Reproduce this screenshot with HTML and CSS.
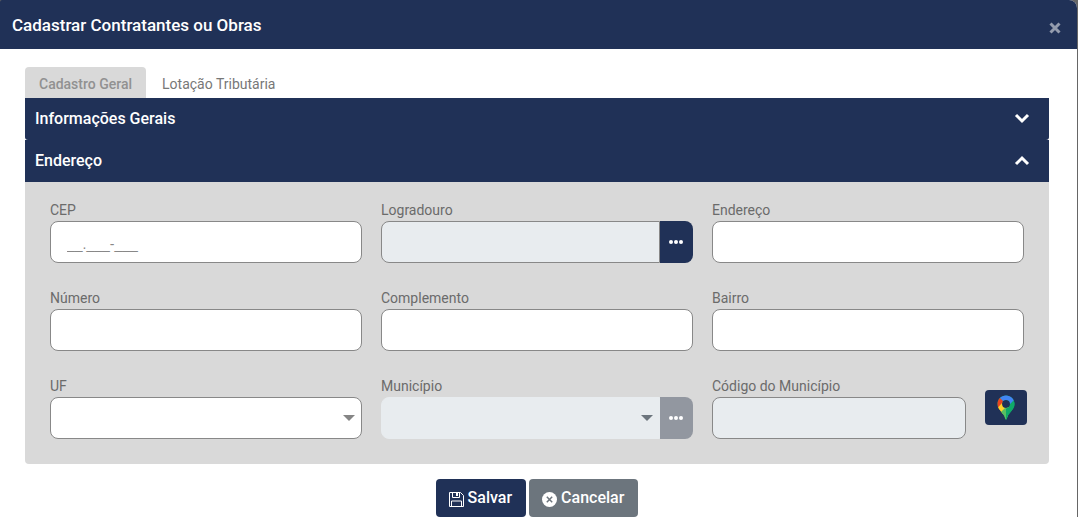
FILE: index.html
```
<!DOCTYPE html>
<html lang="pt-BR">
<head>
    <meta charset="UTF-8">
    <meta name="viewport" content="width=device-width, initial-scale=1.0">
    <title>Cadastrar Contratantes ou Obras</title>
    <link rel="stylesheet" href="styles.css">
</head>
<body>
    <div class="modal">
        <header class="modal-header">
            <h1>Cadastrar Contratantes ou Obras</h1>
            <button type="button" class="btn-fechar" aria-label="Fechar">
                <svg width="14" height="12" viewBox="0 0 14 12"><path d="M2.500 1.500l9 9M11.500 1.500l-9 9" fill="none" stroke="currentColor" stroke-width="3"/></svg>
            </button>
        </header>
        <form class="modal-body">
            <nav class="abas">
                <a href="#geral" class="aba ativa">Cadastro Geral</a>
                <a href="#lotacao" class="aba">Lotação Tributária</a>
            </nav>

            <button type="button" class="secao fechada">
                Informações Gerais
                <svg width="16" height="12" viewBox="0 0 16 12"><path d="M2 3l6 6 6-6" fill="none" stroke="currentColor" stroke-width="3"/></svg>
            </button>
            <button type="button" class="secao">
                Endereço
                <svg width="16" height="12" viewBox="0 0 16 12"><path d="M2 10l6-6 6 6" fill="none" stroke="currentColor" stroke-width="3"/></svg>
            </button>

            <div class="painel">
                <div class="campo">
                    <label for="cep">CEP</label>
                    <input type="text" id="cep" class="mascara" value="__.___-___">
                </div>
                <div class="campo">
                    <label for="logradouro">Logradouro</label>
                    <div class="grupo">
                        <input type="text" id="logradouro" disabled>
                        <button type="button" class="btn-busca" aria-label="Buscar logradouro">
                            <svg width="14" height="4" viewBox="0 0 14 4"><g fill="currentColor"><circle cx="2" cy="2" r="2"/><circle cx="7" cy="2" r="2"/><circle cx="12" cy="2" r="2"/></g></svg>
                        </button>
                    </div>
                </div>
                <div class="campo">
                    <label for="endereco">Endereço</label>
                    <input type="text" id="endereco">
                </div>
                <div class="campo">
                    <label for="numero">Número</label>
                    <input type="text" id="numero">
                </div>
                <div class="campo">
                    <label for="complemento">Complemento</label>
                    <input type="text" id="complemento">
                </div>
                <div class="campo">
                    <label for="bairro">Bairro</label>
                    <input type="text" id="bairro">
                </div>
                <div class="campo">
                    <label for="uf">UF</label>
                    <div class="seletor">
                        <select id="uf"><option></option></select>
                        <svg class="seta" width="12" height="6" viewBox="0 0 12 6"><path d="M0 0h12L6 6z" fill="currentColor"/></svg>
                    </div>
                </div>
                <div class="campo">
                    <label for="municipio">Município</label>
                    <div class="grupo">
                        <div class="seletor">
                            <select id="municipio" disabled><option></option></select>
                            <svg class="seta" width="12" height="6" viewBox="0 0 12 6"><path d="M0 0h12L6 6z" fill="currentColor"/></svg>
                        </div>
                        <button type="button" class="btn-busca" aria-label="Buscar município" disabled>
                            <svg width="14" height="4" viewBox="0 0 14 4"><g fill="currentColor"><circle cx="2" cy="2" r="2"/><circle cx="7" cy="2" r="2"/><circle cx="12" cy="2" r="2"/></g></svg>
                        </button>
                    </div>
                </div>
                <div class="campo-mapa">
                    <div class="campo">
                        <label for="codigo">Código do Município</label>
                        <input type="text" id="codigo" disabled>
                    </div>
                    <button type="button" class="btn-mapa" aria-label="Ver no mapa">
                        <svg width="18" height="25" viewBox="0 0 18 25">
                            <clipPath id="pino"><path fill-rule="evenodd" clip-rule="evenodd" d="M9 0.5C4 0.5 0.5 4.2 0.5 9c0 3.200 1.500 5 3.500 7.500 2 2.500 3.400 4 4.200 7 .3 1.200 1.300 1.200 1.600 0 .8-3 2.200-4.500 4.200-7 2-2.500 3.500-4.300 3.500-7.500C17.500 4.200 14 .5 9 .5zM9 5a4 4 0 1 1 0 8 4 4 0 0 1 0-8z"/></clipPath>
                            <g clip-path="url(#pino)">
                                <path d="M0 0h18v25H0z" fill="#0fa968"/>
                                <path d="M0 0l2.500 2.500L9 8l-7 8-2-4z" fill="#ea4320"/>
                                <path d="M0 13.500L6 7l6 5-7.500 10z" fill="#fdd32b"/>
                                <path d="M3.500 17.500L11 10v15H7z" fill="#58bd62"/>
                                <path d="M2.500 2.500L5 0h13v4.500L11 11z" fill="#4285f4"/>
                                <path d="M9 25V14l8-9h2v20z" fill="#0fa968"/>
                            </g>
                        </svg>
                    </button>
                </div>
            </div>

            <div class="acoes">
                <button type="submit" class="btn btn-salvar">
                    <svg width="15" height="15" viewBox="0 0 15 15"><path d="M.5.5h11l3 3v11H.5zM3.500.5v5h7v-5M2.500 14.500V9h10v5.500" fill="none" stroke="currentColor"/><path d="M7 1h2v3H7z" fill="currentColor"/></svg>
                    Salvar
                </button>
                <button type="button" class="btn btn-cancelar">
                    <svg width="15" height="15" viewBox="0 0 15 15"><circle cx="7.500" cy="7.500" r="7.500" fill="currentColor"/><path d="M4.800 4.800l5.400 5.400M10.200 4.800l-5.400 5.400" stroke="#6c757d" stroke-width="1.500"/></svg>
                    Cancelar
                </button>
            </div>
        </form>
    </div>
</body>
</html>
```
FILE: styles.css
```
* {
    box-sizing: border-box;
}
body {
    margin: 0;
    background-color: #666;
    font-family: Roboto, "Liberation Sans", sans-serif;
    font-size: 14px;
    color: #6b6b6b;
}
button, input, select {
    font: inherit;
    margin: 0;
}
button {
    border: none;
    cursor: pointer;
}
svg {
    display: block;
    flex: none;
}
.modal {
    margin-right: 1px;
    min-height: 100vh;
    background-color: #fff;
    border-radius: 5px 8px 0 0;
}
.modal-header {
    display: flex;
    justify-content: space-between;
    align-items: center;
    height: 49px;
    padding: 0 15px 0 12px;
    background-color: #203157;
    color: #fff;
    border-radius: 2px 8px 0 0;
}
.modal-header h1 {
    margin: 0;
    font-size: 17px;
    font-weight: 500;
}
.btn-fechar {
    padding: 6px 0 0;
    background: none;
    color: #949cae;
}
.modal-body {
    padding: 18px 28px 0 25px;
}
.abas {
    display: flex;
}
.aba {
    padding: 0 16px;
    line-height: 34px;
    height: 31px;
    color: #777;
    text-decoration: none;
}
.aba.ativa {
    padding: 0 14px;
    background-color: #d9d9d9;
    color: #919191;
    font-weight: 500;
    border-radius: 4px 4px 0 0;
}
.secao {
    display: flex;
    justify-content: space-between;
    align-items: center;
    width: 100%;
    height: 42px;
    padding: 0 19px 2px 10px;
    background-color: #203157;
    color: #fff;
    font-size: 16px;
    font-weight: 500;
    text-align: left;
}
.secao.fechada {
    border-radius: 0 0 3px 3px;
}
.painel {
    display: grid;
    grid-template-columns: repeat(3, 1fr);
    gap: 25px 19px;
    padding: 18px 25px 25px;
    background-color: #d9d9d9;
    border-radius: 0 0 4px 4px;
}
.campo {
    flex: 1;
    min-width: 0;
}
.campo label {
    display: block;
    line-height: 21px;
}
.campo input, .campo select {
    display: block;
    width: 100%;
    height: 42px;
    padding: 0 16px;
    border: 1px solid #888;
    border-radius: 8px;
    background-color: #fff;
    color: #6b6b6b;
}
.campo select {
    appearance: none;
}
.campo input:disabled, .campo select:disabled {
    background-color: #e8ecef;
    opacity: 1;
}
.campo select:disabled {
    border-color: #e8ecef;
}
.campo .mascara {
    padding-top: 4px;
    font-family: "Liberation Sans", sans-serif;
    color: #888;
}
.grupo {
    display: flex;
}
.grupo input, .grupo select {
    border-radius: 8px 0 0 8px;
}
.seletor {
    position: relative;
    flex: 1;
}
.seta {
    position: absolute;
    right: 7px;
    top: 18px;
    color: #858585;
    pointer-events: none;
}
.grupo .seta {
    color: #6c757d;
}
.btn-busca {
    display: flex;
    flex: none;
    justify-content: center;
    align-items: center;
    width: 33px;
    padding: 0 1px 0 0;
    background-color: #203157;
    color: #fff;
    border-radius: 0 8px 8px 0;
}
.btn-busca:disabled {
    background-color: #9297a0;
}
.campo-mapa {
    display: flex;
    align-items: flex-start;
    gap: 19px;
    margin-right: -3px;
}
.btn-mapa {
    display: flex;
    justify-content: center;
    align-items: center;
    width: 42px;
    height: 35px;
    margin-top: 14px;
    padding: 0;
    background-color: #203157;
    border-radius: 4px;
}
.acoes {
    display: flex;
    justify-content: center;
    gap: 3px;
    padding-top: 15px;
}
.btn {
    display: flex;
    align-items: center;
    gap: 4px;
    height: 38px;
    padding: 0 14px 2px 13px;
    color: #fff;
    font-size: 16px;
    font-weight: 500;
    border-radius: 4px;
}
.btn svg {
    margin-top: 5px;
}
.btn-salvar {
    background-color: #203157;
}
.btn-cancelar {
    background-color: #6c757d;
}
```
